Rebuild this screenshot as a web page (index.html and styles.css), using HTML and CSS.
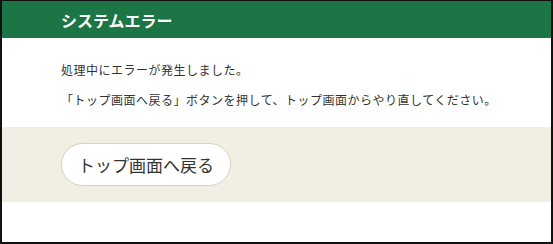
FILE: index.html
```html
<!doctype html>
<html lang="ja">
<head>
    <meta charset="UTF-8">
    <title>システムエラー</title>
    <link rel="stylesheet" href="styles.css">
</head>
<body>
<div class="frame">
    <div class="heading">システムエラー</div>
    <div class="message">
        <p class="line">処理中にエラーが発生しました。</p>
        <p class="line">「トップ画面へ戻る」ボタンを押して、トップ画面からやり直してください。</p>
    </div>
    <div class="actions">
        <button type="button" class="button">トップ画面へ戻る</button>
    </div>
    <div class="footer"></div>
</div>
</body>
</html>
```

FILE: styles.css
```css
body
{
    margin: 0;
    padding: 0;
    background-color: #ffffff;
    font-family: "Noto Sans CJK JP", "Noto Sans", sans-serif;
    color: #333333;
}
.frame
{
    box-sizing: border-box;
    width: 553px;
    height: 244px;
    border-style: solid;
    border-color: #111111;
    border-width: 1px 2px 2px 2px;
    background-color: #ffffff;
}
.heading
{
    height: 37px;
    display: flex;
    align-items: center;
    padding-left: 59px;
    background-color: #1b7545;
    color: #ffffff;
    font-size: 16px;
    font-weight: bold;
}
.message
{
    padding: 17px 20px 12px 59px;
}
.line
{
    margin: 0;
    font-size: 12px;
    letter-spacing: 0.5px;
    line-height: 30px;
    white-space: nowrap;
}
.actions
{
    padding: 16px 59px;
    background-color: #f1eee3;
}
.button
{
    box-sizing: border-box;
    height: 43px;
    padding: 0 16px;
    border: 1px solid #d9d1c2;
    border-radius: 22px;
    background-color: #ffffff;
    color: #333333;
    font-family: "Noto Sans CJK JP", "Noto Sans", sans-serif;
    font-size: 17px;
}
.footer
{
    height: 40px;
}
```
